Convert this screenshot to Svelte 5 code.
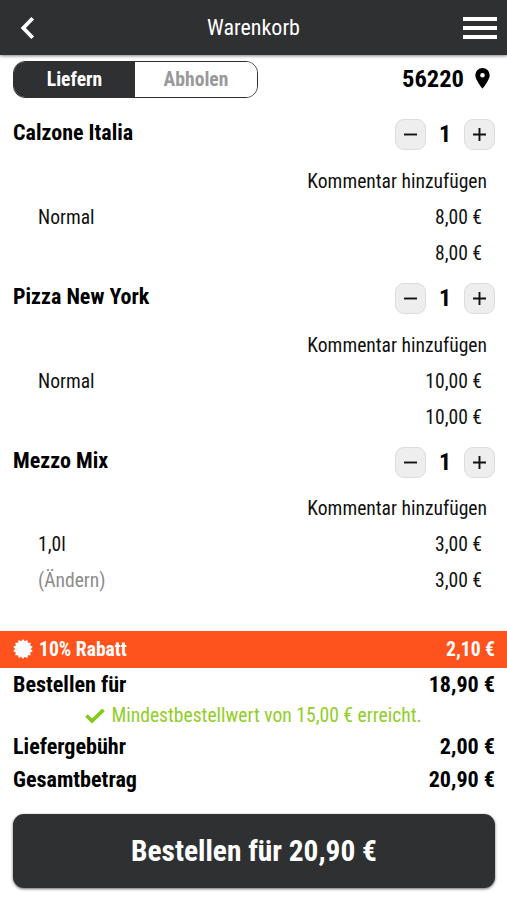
<script lang="ts">
  interface CartItem {
    name: string;
    quantity: number;
    variant: string;
    price: string;
    editable?: boolean;
  }

  let mode = $state("delivery");

  let items = $state<CartItem[]>([
    { name: "Calzone Italia", quantity: 1, variant: "Normal", price: "8,00 €" },
    { name: "Pizza New York", quantity: 1, variant: "Normal", price: "10,00 €" },
    { name: "Mezzo Mix", quantity: 1, variant: "1,0l", price: "3,00 €", editable: true },
  ]);

  // 14-pointed badge outline
  const badge = Array.from({ length: 28 }, (_, i) => {
    const r = i % 2 ? 7.9 : 10;
    const a = (i * Math.PI) / 14;
    return `${(10 + r * Math.sin(a)).toFixed(2)},${(10 - r * Math.cos(a)).toFixed(2)}`;
  }).join(" ");
</script>

<div class="page">
  <header>
    <button class="nav" aria-label="Zurück">
      <svg width="16" height="24" viewBox="0 0 16 24"><path d="M12.700 2.200 3.300 12l9.400 9.800" fill="none" stroke="#fff" stroke-width="3.800" /></svg>
    </button>
    <h1>Warenkorb</h1>
    <button class="nav" aria-label="Menü">
      <svg width="34" height="24" viewBox="0 0 34 24"><path d="M0 3h34M0 12h34M0 21h34" stroke="#fff" stroke-width="4" /></svg>
    </button>
  </header>

  <div class="toolbar">
    <div class="toggle">
      <button class:active={mode === "delivery"} onclick={() => (mode = "delivery")}>Liefern</button>
      <button class:active={mode === "pickup"} onclick={() => (mode = "pickup")}>Abholen</button>
    </div>
    <div class="zip">
      <span>56220</span>
      <svg width="15" height="21" viewBox="0 0 15 21"><path fill-rule="evenodd" d="M7.500 0A7.200 7.200 0 0 0 .3 7.200C.3 12 7.500 20.600 7.500 20.600S14.700 12 14.700 7.200A7.200 7.200 0 0 0 7.500 0Zm0 4.900a2.300 2.300 0 1 1 0 4.600 2.300 2.300 0 0 1 0-4.600Z" /></svg>
    </div>
  </div>

  <main>
    {#each items as item}
      <section class="item">
        <div class="item-head">
          <h2>{item.name}</h2>
          <div class="stepper">
            <button aria-label="Weniger" onclick={() => item.quantity--}>
              <svg width="15" height="15" viewBox="0 0 15 15"><path d="M1 7.500h13" stroke="#111" stroke-width="1.900" /></svg>
            </button>
            <span>{item.quantity}</span>
            <button aria-label="Mehr" onclick={() => item.quantity++}>
              <svg width="15" height="15" viewBox="0 0 15 15"><path d="M1 7.500h13M7.500 1v13" stroke="#111" stroke-width="1.900" /></svg>
            </button>
          </div>
        </div>
        <div class="line comment"><span>Kommentar hinzufügen</span></div>
        <div class="line"><span>{item.variant}</span><span>{item.price}</span></div>
        <div class="line">
          <span class="edit">{#if item.editable}(Ändern){/if}</span>
          <span>{item.price}</span>
        </div>
      </section>
    {/each}
  </main>

  <div class="discount">
    <svg width="20" height="20" viewBox="0 0 20 20"><polygon points={badge} fill="#fff" /></svg>
    <span class="label">10% Rabatt</span>
    <span>2,10 €</span>
  </div>

  <div class="totals">
    <div class="total"><span>Bestellen für</span><span>18,90 €</span></div>
    <div class="notice">
      <svg width="20" height="16" viewBox="0 0 20 16"><path d="m1.500 7.500 5.500 5.500L18.500 1.800" fill="none" stroke="#82cb15" stroke-width="3.700" /></svg>
      <span>Mindestbestellwert von 15,00 € erreicht.</span>
    </div>
    <div class="total"><span>Liefergebühr</span><span>2,00 €</span></div>
    <div class="total"><span>Gesamtbetrag</span><span>20,90 €</span></div>
  </div>

  <button class="order"><span>Bestellen für 20,90 €</span></button>
</div>

<style>
  :global(body) { background: #fff; }
  .page {
    width: 507px;
    height: 900px;
    overflow: hidden;
    box-sizing: border-box;
    display: flex;
    flex-direction: column;
    font-family: "Roboto Condensed", Roboto, sans-serif;
    font-stretch: 75%;
    font-size: 19.600px;
    color: #111;
  }
  button {
    font: inherit;
    font-stretch: inherit;
    border: none;
    padding: 0;
    cursor: pointer;
  }
  svg { display: block; flex-shrink: 0; }
  h1, h2 { margin: 0; }
  header {
    height: 54.500px;
    flex-shrink: 0;
    box-sizing: border-box;
    padding: 1px 10px 0 20px;
    display: grid;
    grid-template-columns: 24px 1fr 34px;
    align-items: center;
    background: #2f3032;
    box-shadow: 0 1px 3px rgba(0, 0, 0, 0.5);
    color: #fff;
  }
  h1 {
    font-size: 22px;
    font-weight: 400;
    text-align: center;
    line-height: 30px;
  }
  .nav { background: none; }
  .toolbar {
    display: flex;
    justify-content: space-between;
    align-items: center;
    height: 36px;
    padding: 6.500px 17px 0 13px;
  }
  .toggle {
    display: flex;
    width: 245px;
    height: 37px;
    box-sizing: border-box;
    border: 1px solid #2f3032;
    border-radius: 12px;
    overflow: hidden;
    font-weight: 700;
  }
  .toggle button { flex: 1; background: #fff; color: #999; }
  .toggle button.active { flex: 0 0 121px; background: #2f3032; color: #fff; }
  .zip {
    display: flex;
    align-items: center;
    gap: 11px;
    font-size: 24.500px;
    font-weight: 700;
    color: #000;
  }
  .zip span { margin-top: -1px; }
  .zip svg { margin-top: -1px; }
  main { padding-top: 22px; height: 512px; }
  .item { height: 163.800px; }
  .item-head {
    display: flex;
    justify-content: space-between;
    align-items: flex-start;
    height: 44.800px;
    padding: 0 12px 0 13px;
  }
  h2 { font-size: 22px; font-weight: 700; line-height: 27px; color: #000; }
  .stepper { display: flex; align-items: center; font-size: 24px; font-weight: 700; }
  .stepper span { width: 38px; text-align: center; line-height: 31px; color: #000; }
  .stepper button {
    width: 31px;
    height: 31px;
    box-sizing: border-box;
    display: grid;
    place-items: center;
    border: 1px solid #dcdcdc;
    border-radius: 9px;
    background: #eee;
  }
  .line {
    display: flex;
    justify-content: space-between;
    height: 36px;
    line-height: 36px;
    padding: 0 25px 0 38px;
  }
  .comment { justify-content: flex-end; padding-right: 20px; }
  .edit { color: #8c8c8c; }
  .discount {
    display: flex;
    align-items: center;
    height: 36.500px;
    padding: 0 12px 0 13px;
    background: #ff531d;
    color: #fff;
    font-weight: 700;
  }
  .label { flex: 1; margin-left: 6px; }
  .total {
    display: flex;
    justify-content: space-between;
    padding: 0 12px 0 13px;
    height: 33px;
    line-height: 33px;
    font-size: 22.100px;
    font-weight: 700;
    color: #000;
  }
  .notice {
    display: flex;
    align-items: center;
    justify-content: center;
    gap: 6px;
    height: 29px;
    padding-top: 1px;
    box-sizing: border-box;
    color: #91ce27;
  }
  .order {
    flex-shrink: 0;
    width: 482px;
    height: 74px;
    margin: 18px 12px 0 13px;
    border-radius: 11px;
    background: #2f3032;
    box-shadow: 0 1px 3px rgba(0, 0, 0, 0.6);
    color: #fff;
    font-size: 29.400px;
    font-weight: 700;
  }
</style>
